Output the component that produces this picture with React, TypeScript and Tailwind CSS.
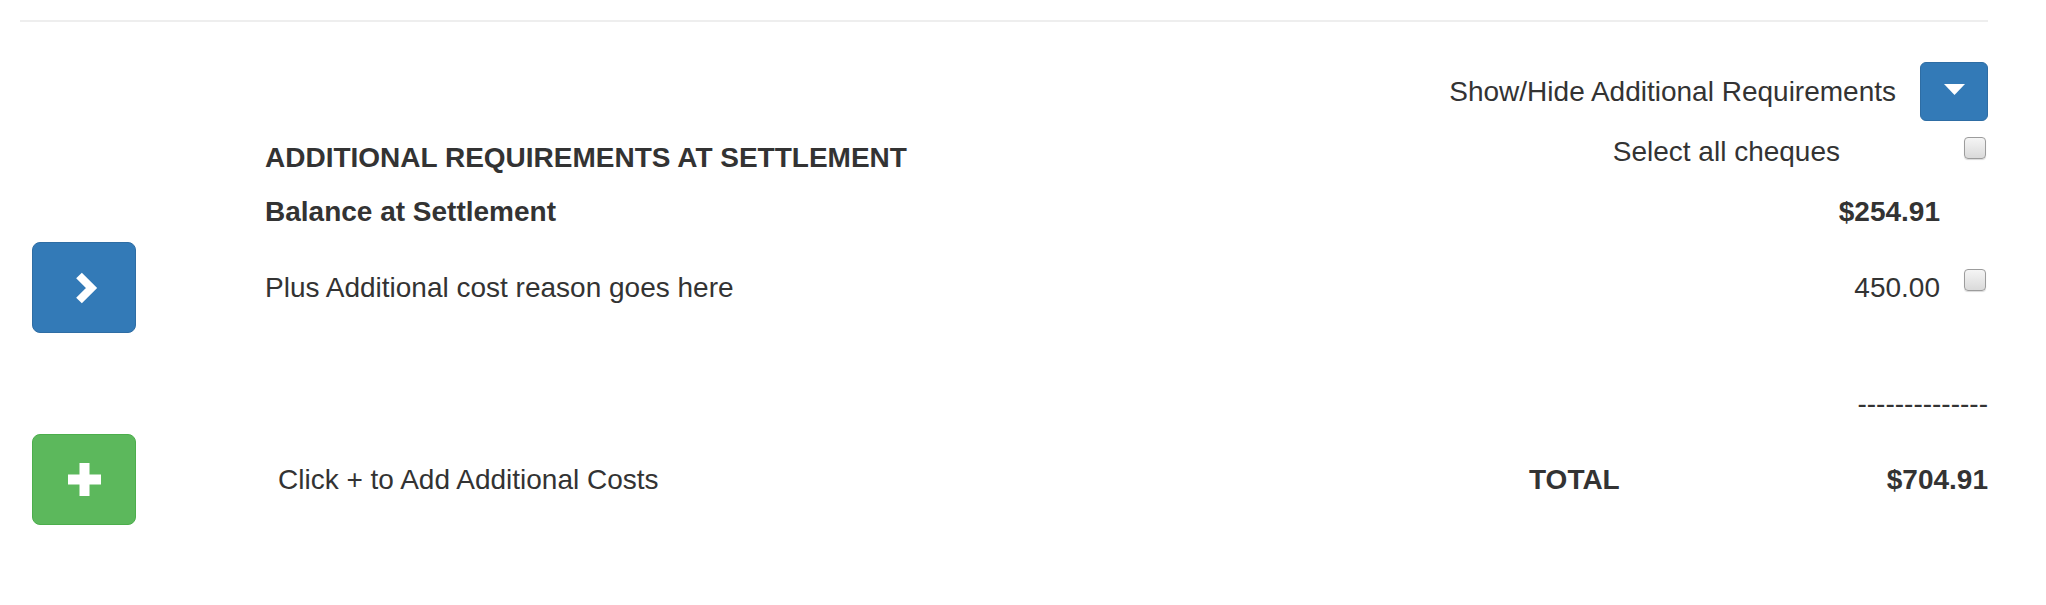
function Checkbox() {
  return (
    <input
      type="checkbox"
      className="h-[22px] w-[22px] appearance-none rounded-[4px] border border-[#9c9c9c] bg-linear-to-b from-[#f5f5f5] to-[#dadada] shadow-[0_1px_1px_rgba(0,0,0,0.15)]"
    />
  );
}

function App() {
  return (
    <div className="min-h-[605px] w-full bg-white font-['Liberation_Sans',Arial,sans-serif] text-[28px] leading-[32px] text-[#333]">
      <div className="pt-[20px] pr-[58px] pl-[20px]">
        <div className="h-[2px] bg-[#eee]" />

        {/* toggle */}
        <div className="mt-[40px] flex h-[59px] items-center justify-end">
          <span className="mr-[24px]">Show/Hide Additional Requirements</span>
          <button className="flex h-[59px] w-[68px] items-center justify-center rounded-[6px] border border-[#2e6da4] bg-[#337ab7]">
            <svg width="21" height="11" viewBox="0 0 21 11" className="mb-[5px]">
              <polygon points="0,0 21,0 10.5,11" fill="#fff" />
            </svg>
          </button>
        </div>

        {/* heading */}
        <div className="flex h-[54px]">
          <div className="w-[245px] shrink-0" />
          <h2 className="mt-[21px] flex-1 font-bold uppercase">
            Additional Requirements at Settlement
          </h2>
          <span className="mt-[15px] mr-[100px]">Select all cheques</span>
          <div className="flex w-[48px] justify-end pt-[16px] pr-[2px]">
            <Checkbox />
          </div>
        </div>

        <div className="mt-[21px] flex h-[32px]">
          <div className="w-[245px] shrink-0" />
          <b className="flex-1">Balance at Settlement</b>
          <b>$254.91</b>
          <div className="w-[48px]" />
        </div>

        {/* cost line */}
        <div className="mt-[14px] flex h-[91px] items-center">
          <button className="ml-[12px] flex h-[91px] w-[104px] items-center justify-center rounded-[8px] border border-[#2e6da4] bg-[#337ab7]">
            <svg width="24" height="32" viewBox="0 0 24 32" className="ml-[4px]">
              <polyline
                points="5,3.5 17.5,16 5,28.5"
                fill="none"
                stroke="#fff"
                strokeWidth="8"
                strokeLinejoin="miter"
              />
            </svg>
          </button>
          <div className="w-[129px] shrink-0" />
          <span className="flex-1">Plus Additional cost reason goes here</span>
          <span>450.00</span>
          <div className="flex w-[48px] justify-end self-start pt-[27px] pr-[2px]">
            <Checkbox />
          </div>
        </div>

        <div className="mt-[55px] flex h-[32px] justify-end">
          <span>--------------</span>
        </div>

        {/* total */}
        <div className="mt-[14px] flex h-[91px] items-center">
          <button className="ml-[12px] flex h-[91px] w-[104px] items-center justify-center rounded-[8px] border border-[#4cae4c] bg-[#5cb85c]">
            <svg width="33" height="33" viewBox="0 0 33 33">
              <rect x="11.5" y="0" width="10" height="33" fill="#fff" />
              <rect x="0" y="11.5" width="33" height="10" fill="#fff" />
            </svg>
          </button>
          <div className="w-[142px] shrink-0" />
          <span className="flex-1">Click + to Add Additional Costs</span>
          <div className="flex w-[459px] justify-between font-bold">
            <span>TOTAL</span>
            <span>$704.91</span>
          </div>
        </div>
      </div>
    </div>
  );
}

export default App;
